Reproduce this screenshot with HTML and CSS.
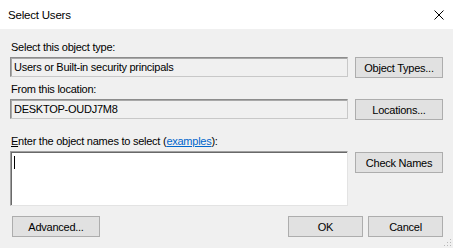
FILE: index.html
```html
<!DOCTYPE html>
<html>
<head>
<meta charset="utf-8">
<link rel="stylesheet" href="styles.css">
</head>
<body>
<div class="dialog">
  <div class="titlebar">
    <span class="title">Select Users</span>
    <svg class="close" width="10" height="10" viewBox="0 0 10 10"><path d="M0.5 0.5 L9.5 9.5 M9.5 0.5 L0.5 9.5" stroke="#000" stroke-width="1" fill="none"/></svg>
  </div>
  <div class="content">
    <div class="label first">Select this object type:</div>
    <div class="row">
      <div class="box">Users or Built-in security principals</div>
      <div class="btn">Object Types...</div>
    </div>
    <div class="label">From this location:</div>
    <div class="row">
      <div class="box">DESKTOP-OUDJ7M8</div>
      <div class="btn">Locations...</div>
    </div>
    <div class="label third"><u>E</u>nter the object names to select (<a class="link">examples</a>):</div>
    <div class="row">
      <div class="textarea"><span class="caret"></span></div>
      <div class="btn check">Check Names</div>
    </div>
    <div class="footer">
      <div class="btn advanced">Advanced...</div>
      <div class="actions">
        <div class="btn small">OK</div>
        <div class="btn small">Cancel</div>
      </div>
    </div>
  </div>
  <svg class="grip" width="9" height="9" viewBox="0 0 9 9">
    <rect x="7" y="1" width="1" height="1" fill="#b8b8b8"/>
    <rect x="4" y="4" width="1" height="1" fill="#b8b8b8"/>
    <rect x="7" y="4" width="1" height="1" fill="#b8b8b8"/>
    <rect x="1" y="7" width="1" height="1" fill="#b8b8b8"/>
    <rect x="4" y="7" width="1" height="1" fill="#b8b8b8"/>
    <rect x="7" y="7" width="1" height="1" fill="#b8b8b8"/>
  </svg>
</div>
</body>
</html>
```
FILE: styles.css
```css
html, body {
  margin: 0;
  padding: 0;
}
body {
  background: #f0f0f0;
  font-family: "Liberation Sans", Arial, sans-serif;
  font-size: 11px;
  letter-spacing: -0.25px;
  color: #000;
}
.dialog {
  position: relative;
  width: 453px;
  height: 248px;
  background: #f0f0f0;
  overflow: hidden;
}
.titlebar {
  height: 29px;
  background: #fff;
  display: flex;
  align-items: center;
  justify-content: space-between;
  padding: 0 9px 0 8px;
}
.title {
  font-size: 11.5px;
  letter-spacing: -0.2px;
  color: #000;
}
.close {
  display: block;
}
.content {
  padding: 0 10px;
}
.label {
  height: 16px;
  line-height: 16px;
  margin-top: 3px;
  padding-left: 1px;
  white-space: nowrap;
}
.label.first {
  margin-top: 10px;
}
.label.third {
  margin-top: 13px;
}
.link {
  color: #0066cc;
  text-decoration: underline;
}
.row {
  display: flex;
  align-items: flex-start;
  gap: 7px;
  margin-top: 2px;
}
.box {
  box-sizing: border-box;
  width: 338px;
  height: 20px;
  border: 1px solid;
  border-color: #8c8c8c #c8c8c8 #c8c8c8 #8c8c8c;
  box-shadow: inset 1px 1px 0 #a8a8a8;
  background: #f0f0f0;
  display: flex;
  align-items: center;
  padding-left: 3px;
  white-space: nowrap;
}
.textarea {
  box-sizing: border-box;
  width: 338px;
  height: 55px;
  border: 1px solid;
  border-color: #a0a0a0 #e3e3e3 #e3e3e3 #a0a0a0;
  box-shadow: inset 1px 1px 0 #696969;
  background: #fff;
  padding: 4px 0 0 3px;
}
.caret {
  display: block;
  width: 1px;
  height: 13px;
  background: #000;
}
.btn {
  box-sizing: border-box;
  width: 88px;
  height: 21px;
  background: #e1e1e1;
  border: 1px solid #adadad;
  display: flex;
  align-items: center;
  justify-content: center;
  white-space: nowrap;
}
.btn.check {
  margin-top: 1px;
}
.footer {
  display: flex;
  justify-content: space-between;
  margin-top: 10px;
}
.btn.advanced {
  margin-left: 2px;
}
.actions {
  display: flex;
  gap: 5px;
}
.btn.small {
  width: 75px;
}
.grip {
  position: absolute;
  right: 1px;
  bottom: 1px;
}
```
